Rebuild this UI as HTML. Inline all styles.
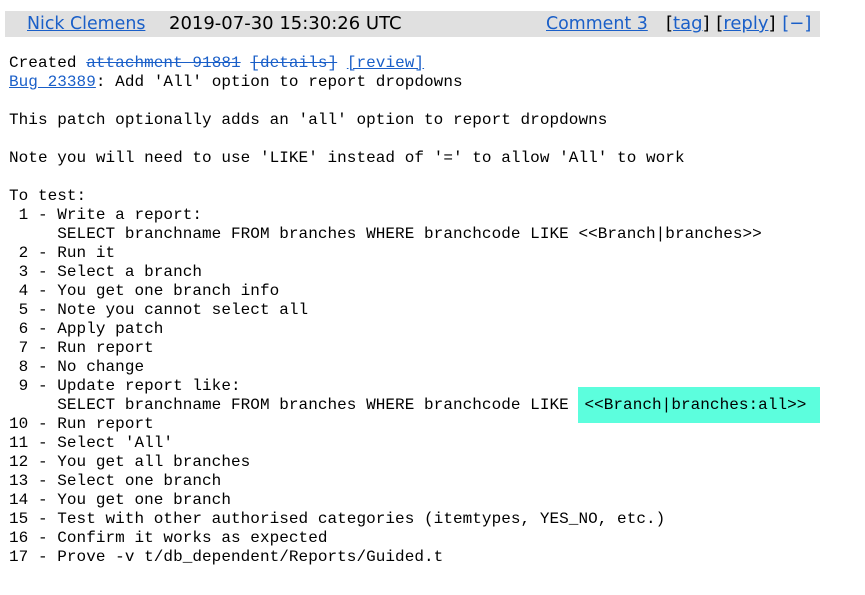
<!DOCTYPE html>
<html><head><meta charset="utf-8"><style>
body{margin:0;background:#fff;width:865px;height:595px;overflow:hidden;position:relative;font-family:"DejaVu Sans",Verdana,sans-serif}
.bar{position:absolute;left:5px;top:11px;width:815px;height:26px;background:#e0e0e0}
.h{position:absolute;top:13px;font-size:18px;line-height:22px;white-space:nowrap;color:#000}
a{color:#1a5fc8;text-decoration:underline}
pre{position:absolute;left:9px;top:54px;margin:0;font-family:"Liberation Mono","Courier New",monospace;font-size:16px;line-height:19px;letter-spacing:0.05px;color:#000}
.s{text-decoration:line-through}
.hl{background:#5cfedd;padding:9px 14px 9px 6px}
</style></head><body>
<div class="bar"></div>
<div class="h" style="left:27px;font-size:17.4px"><a>Nick Clemens</a></div>
<div class="h" style="left:169px">2019-07-30 15:30:26 UTC</div>
<div class="h" style="left:546px;font-size:17.4px"><a>Comment 3</a></div>
<div class="h" style="left:666px;word-spacing:1px">[<a>tag</a>] [<a>reply</a>] <span style="color:#1a5fc8">[−]</span></div>
<pre>Created <a class="s">attachment 91881</a> <a class="s">[details]</a> <a>[review]</a>
<a>Bug 23389</a>: Add 'All' option to report dropdowns

This patch optionally adds an 'all' option to report dropdowns

Note you will need to use 'LIKE' instead of '=' to allow 'All' to work

To test:
 1 - Write a report:
     SELECT branchname FROM branches WHERE branchcode LIKE &lt;&lt;Branch|branches&gt;&gt;
 2 - Run it
 3 - Select a branch
 4 - You get one branch info
 5 - Note you cannot select all
 6 - Apply patch
 7 - Run report
 8 - No change
 9 - Update report like:
     SELECT branchname FROM branches WHERE branchcode LIKE <span class="hl">&lt;&lt;Branch|branches:all&gt;&gt;</span>
10 - Run report
11 - Select 'All'
12 - You get all branches
13 - Select one branch
14 - You get one branch
15 - Test with other authorised categories (itemtypes, YES_NO, etc.)
16 - Confirm it works as expected
17 - Prove -v t/db_dependent/Reports/Guided.t</pre>
</body></html>
